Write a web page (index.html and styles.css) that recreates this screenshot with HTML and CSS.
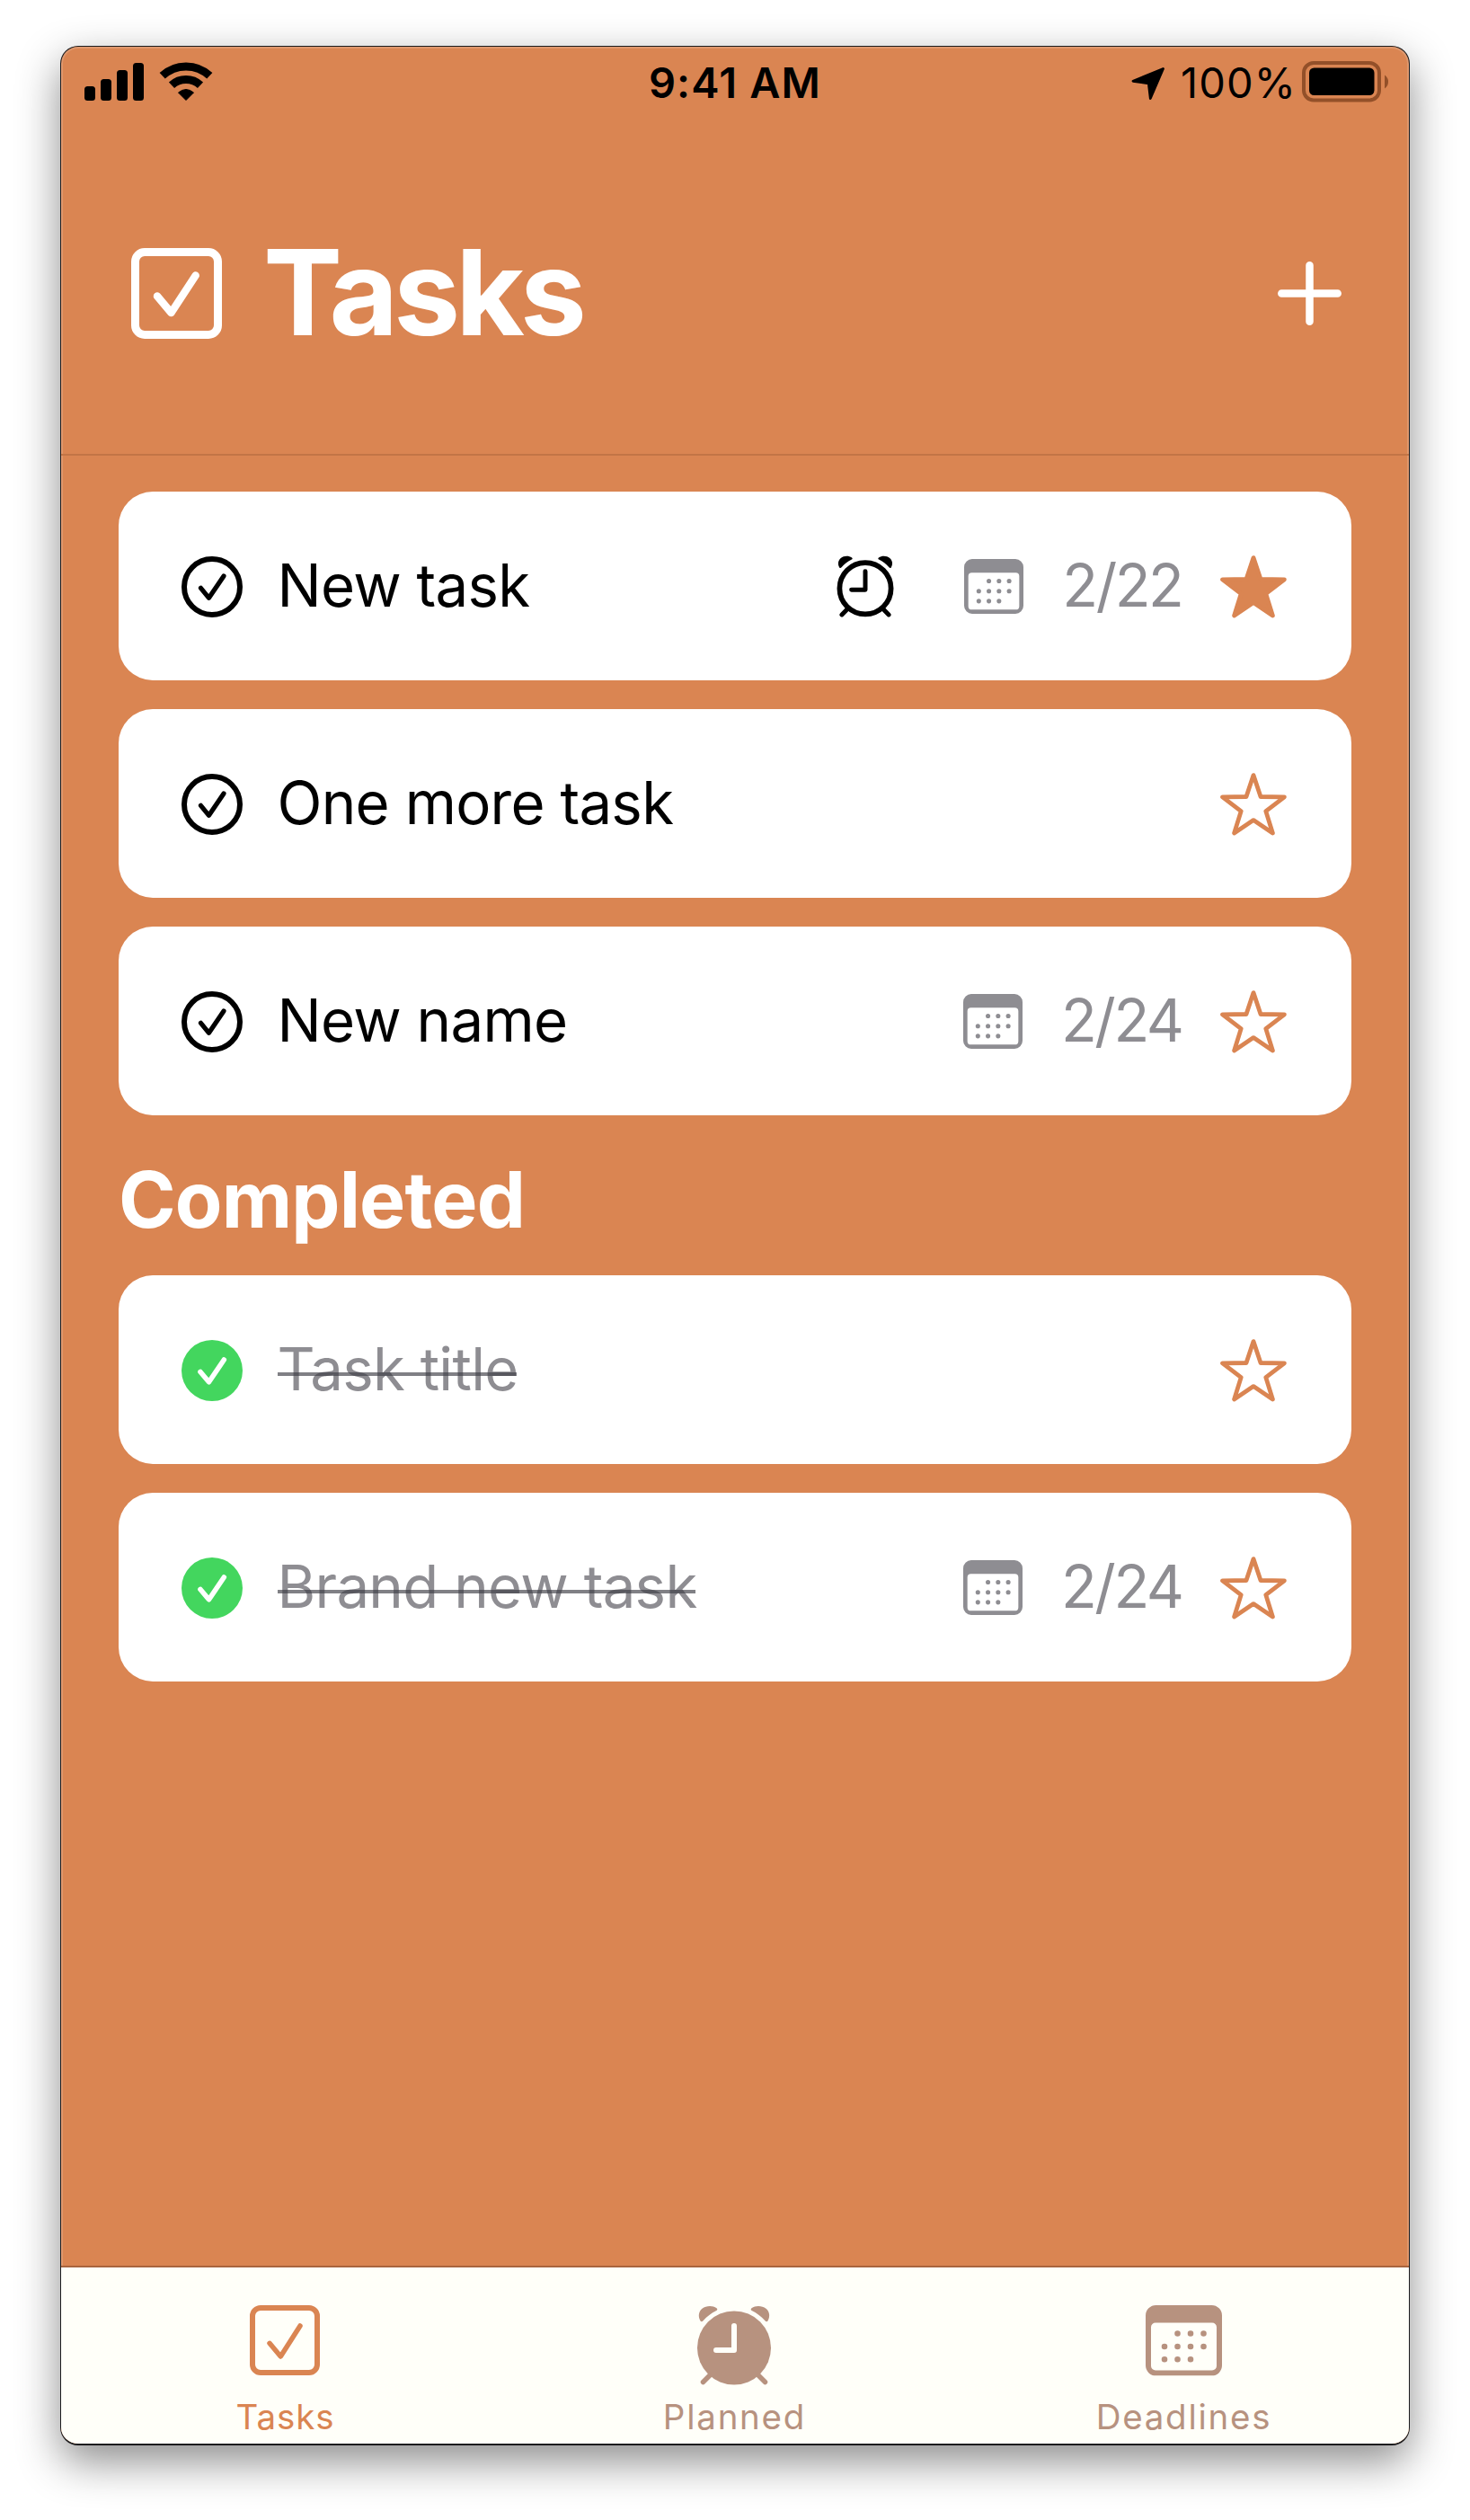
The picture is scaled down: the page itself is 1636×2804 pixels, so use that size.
FILE: index.html
```html
<!DOCTYPE html>
<html lang="en">
<head>
<meta charset="utf-8">
<title>Tasks</title>
<link rel="stylesheet" href="styles.css">
</head>
<body>
<svg class="sprite" aria-hidden="true">
  <symbol id="check-circle" viewBox="0 0 68 68">
    <circle cx="34" cy="34" r="31" fill="none" stroke="currentColor" stroke-width="6"/>
    <path d="M21.5 35.3 30.5 46.3 47 22" fill="none" stroke="currentColor" stroke-width="5.2" stroke-linecap="round" stroke-linejoin="round"/>
  </symbol>
  <symbol id="check-circle-fill" viewBox="0 0 68 68">
    <circle cx="34" cy="34" r="34" fill="currentColor"/>
    <path d="M21 35.5 30.5 46.8 47.3 22" fill="none" stroke="#fff" stroke-width="5.6" stroke-linecap="round" stroke-linejoin="round"/>
  </symbol>
  <symbol id="star-shape" viewBox="0 0 74 70">
    <path d="M37 2.6 45 26.5 71.4 26.8 50.8 42.6 58.4 67 37 52.6 15.6 67 23.2 42.6 2.6 26.8 29 26.5Z" stroke="currentColor" stroke-width="4.8" stroke-linejoin="round"/>
  </symbol>
  <symbol id="calendar" viewBox="0 0 85 78.5">
    <path fill="currentColor" fill-rule="evenodd" d="M11.500 0H73.500A11.500 11.500 0 0 1 85 11.500V67A11.500 11.500 0 0 1 73.500 78.500H11.500A11.500 11.500 0 0 1 0 67V11.500A11.500 11.500 0 0 1 11.500 0ZM11 19.500A5 5 0 0 0 6 24.500V67.500A5 5 0 0 0 11 72.500H74A5 5 0 0 0 79 67.500V24.500A5 5 0 0 0 74 19.500Z"/>
    <path d="M35.500 31.500h.01M50 31.500h.01M64.500 31.500h.01M21 46h.01M35.500 46h.01M50 46h.01M64.500 46h.01M21 60.300h.01M35.500 60.300h.01M50 60.300h.01" stroke="currentColor" stroke-width="6.600" stroke-linecap="round"/>
  </symbol>
  <symbol id="bells" viewBox="0 0 86 90">
    <path id="bell" fill="currentColor" d="M5.500 17.500C2.600 12.500 3.500 7 7.500 3.800 12 .2 19 0 23.500 3.200 24.700 4.200 24.500 5.300 23.300 6 17.500 9 12.800 12.500 8.800 17 7.600 18.400 6.300 18.700 5.500 17.500Z"/>
    <use href="#bell" transform="matrix(-1 0 0 1 86 0)"/>
  </symbol>
</svg>

<main class="phone">
  <div class="status">
    <div class="status-left">
      <svg width="66" height="42" viewBox="0 0 66 42"><rect y="26" width="12" height="16" rx="3.500"/><rect x="18" y="18" width="12" height="24" rx="3.500"/><rect x="36" y="8" width="12" height="34" rx="3.500"/><rect x="54" width="12" height="42" rx="3.500"/></svg>
      <svg width="60" height="46" viewBox="0 0 60 46"><g fill="none" stroke="#000" stroke-width="9"><path d="M3.700 16.300A38.500 38.500 0 0 1 56.300 16.300"/><path d="M14 26.800A23.500 23.500 0 0 1 46 26.800"/></g><path d="M30 43.500 21.500 35Q30 28 38.500 35Z" stroke="#000" stroke-width="1" stroke-linejoin="round"/></svg>
    </div>
    <div class="time">9:41 AM</div>
    <div class="status-right">
      <svg class="location" width="38" height="38" viewBox="0 0 38 38"><path d="M35.500 2.500 2 16.300 19.300 18.800 21.300 35.500Z" stroke="#000" stroke-width="2.800" stroke-linejoin="round"/></svg>
      <span class="percent">100%</span>
      <svg width="97" height="46" viewBox="0 0 97 46"><rect x="2" y="2" width="84" height="41.500" rx="11" fill="none" stroke="#935029" stroke-width="4"/><rect x="8" y="7.500" width="72.500" height="30.500" rx="5.500"/><path d="M92 15.500Q96 18 96 23T92 30.500Z" fill="#935029"/></svg>
    </div>
  </div>

  <header class="header">
    <svg width="101" height="101" viewBox="0 0 101 101" fill="none" stroke="#fff"><rect x="4.500" y="4.500" width="92" height="92" rx="10.500" stroke-width="9"/><path d="M29 53.500 44.500 72 71.700 30.500" stroke-width="8.500" stroke-linecap="round" stroke-linejoin="round"/></svg>
    <h1 class="title">Tasks</h1>
    <svg class="add" width="71" height="71" viewBox="0 0 71 71" stroke="#fff" stroke-width="8.500" stroke-linecap="round"><path d="M35.500 4.300V66.700M4.300 35.500H66.700"/></svg>
  </header>

  <section class="content">
    <div class="list">
      <article class="card">
        <svg class="check"><use href="#check-circle"/></svg>
        <span class="name">New task</span>
        <svg class="alarm" viewBox="0 0 86 90"><use href="#bells"/><circle cx="43" cy="48" r="37.300" fill="none" stroke="currentColor" stroke-width="7.500"/><path d="M43 23V50H23M16 79 9 86M70 79 77 86" fill="none" stroke="currentColor" stroke-width="6.500" stroke-linecap="round" stroke-linejoin="round"/></svg>
        <svg class="cal"><use href="#calendar"/></svg>
        <span class="date">2/22</span>
        <svg class="star star-on"><use href="#star-shape"/></svg>
      </article>
      <article class="card">
        <svg class="check"><use href="#check-circle"/></svg>
        <span class="name">One more task</span>
        <svg class="star"><use href="#star-shape"/></svg>
      </article>
      <article class="card">
        <svg class="check"><use href="#check-circle"/></svg>
        <span class="name">New name</span>
        <svg class="cal"><use href="#calendar"/></svg>
        <span class="date">2/24</span>
        <svg class="star"><use href="#star-shape"/></svg>
      </article>
    </div>
    <h2 class="section-title">Completed</h2>
    <div class="list">
      <article class="card done">
        <svg class="check"><use href="#check-circle-fill"/></svg>
        <span class="name"><span class="struck">Task title</span></span>
        <svg class="star"><use href="#star-shape"/></svg>
      </article>
      <article class="card done">
        <svg class="check"><use href="#check-circle-fill"/></svg>
        <span class="name"><span class="struck">Brand new task</span></span>
        <svg class="cal"><use href="#calendar"/></svg>
        <span class="date">2/24</span>
        <svg class="star"><use href="#star-shape"/></svg>
      </article>
    </div>
  </section>

  <nav class="tabs">
    <div class="tab active">
      <svg width="78" height="90" viewBox="0 0 78 90" fill="none" stroke="currentColor"><rect x="3" y="3" width="72" height="72" rx="9" stroke-width="6"/><path d="M22 42.300 34.300 57 56 23" stroke-width="5.500" stroke-linecap="round" stroke-linejoin="round"/></svg>
      <span class="label">Tasks</span>
    </div>
    <div class="tab">
      <svg width="86" height="90" viewBox="0 0 86 90"><use href="#bells"/><circle cx="43" cy="47.500" r="41" fill="currentColor"/><path d="M16 78 8.500 85.500M70 78 77.500 85.500" stroke="currentColor" stroke-width="5.500" stroke-linecap="round"/><path d="M43 23V50H23" fill="none" stroke="#fffff9" stroke-width="6" stroke-linecap="round" stroke-linejoin="round"/></svg>
      <span class="label">Planned</span>
    </div>
    <div class="tab">
      <svg width="85" height="90" viewBox="0 0 85 90"><use href="#calendar" width="85" height="78.500"/></svg>
      <span class="label">Deadlines</span>
    </div>
  </nav>
</main>
</body>
</html>
```
FILE: styles.css
```css
* { box-sizing: border-box; }

body {
  margin: 0;
  height: 2804px;
  padding: 51px 67px 0;
  background: #fff;
  color: #000;
  font-family: Inter, "Liberation Sans", sans-serif;
  overflow: hidden;
}

svg { display: block; flex: none; }
.sprite { position: absolute; width: 0; height: 0; }

.phone {
  display: flex;
  flex-direction: column;
  width: 1502px;
  height: 2670px;
  border: 1px solid #1c1c1e;
  border-bottom-width: 2px;
  border-radius: 20px;
  background: #da8552;
  box-shadow: inset 0 0 0 2px rgba(255, 255, 255, .16), 0 18px 48px rgba(0, 0, 0, .45);
  overflow: hidden;
}

/* Status bar */
.status {
  display: grid;
  grid-template-columns: 1fr auto 1fr;
  align-items: center;
  height: 80px;
  padding: 0 22px 0 26px;
  font-size: 47px;
  line-height: 56px;
}
.status-left { display: flex; align-items: center; gap: 17px; margin-top: -3px; }
.time { margin-right: 4px; font-weight: 600; letter-spacing: 1.15px; }
.status-right { display: flex; align-items: center; justify-content: flex-end; }
.location { margin-right: 17px; margin-top: 2px; }
.percent { letter-spacing: 1.1px; margin-right: 6px; }
.status-right svg:last-child { margin-top: -3px; }

/* Header */
.header {
  display: flex;
  align-items: center;
  height: 375px;
  padding: 15px 75px 0 78px;
  border-bottom: 2px solid #c27446;
  margin: 0;
}
.title {
  margin: 0 0 3px 46px;
  color: #fff;
  font-size: 132px;
  font-weight: 700;
  line-height: 160px;
  letter-spacing: -4.9px;
}
.add { margin-left: auto; }

/* Task lists */
.content { flex: 1; padding: 39.700px 64px 0; }
.list { display: flex; flex-direction: column; gap: 31.400px; }
.card {
  display: flex;
  align-items: center;
  height: 210.600px;
  padding: 0 72.500px 0 69.500px;
  border-radius: 38px;
  background: #fff;
  font-size: 65.300px;
  line-height: 80px;
}
.check { width: 68px; height: 68px; margin-top: 2px; }
.name { flex: 1; margin: 0 0 0 39px; letter-spacing: -.7px; }
.alarm { width: 66px; height: 69px; margin: 1px 77px 0 0; }
.cal { width: 66px; height: 61px; margin: 1px 43px 0 0; color: #8e8d92; }
.date { margin-bottom: 0; color: #8e8d92; letter-spacing: -2.450px; }
.star { width: 74px; height: 70px; margin: 3px 0 0 42px; color: #da8552; fill: none; }
.star-on { fill: currentColor; }

.done .check { color: #43d65e; }
.done .name { color: #8e8d92; }
.struck { position: relative; display: inline-block; }
.struck::after {
  content: "";
  position: absolute;
  left: 0;
  right: 2px;
  top: calc(50% + 3px);
  height: 4px;
  background: rgba(60, 60, 67, .65);
}

.section-title {
  height: 177.400px;
  margin: 0;
  padding: 8.500px 0 0;
  color: #fff;
  font-size: 86px;
  font-weight: 700;
  line-height: 170px;
  letter-spacing: -.85px;
}

/* Tab bar */
.tabs {
  display: grid;
  grid-template-columns: repeat(3, 1fr);
  height: 198px;
  border-top: 2px solid #a9653f;
  background: #fffff9;
}
.tab {
  display: flex;
  flex-direction: column;
  align-items: center;
  gap: 11px;
  padding: 41.500px 2px 0 0;
  color: #b7927f;
}
.label { margin-left: 1px; font-size: 38.500px; line-height: 46px; letter-spacing: 1.750px; }
.active { color: #da8552; }
.active .label { letter-spacing: .9px; }
```
